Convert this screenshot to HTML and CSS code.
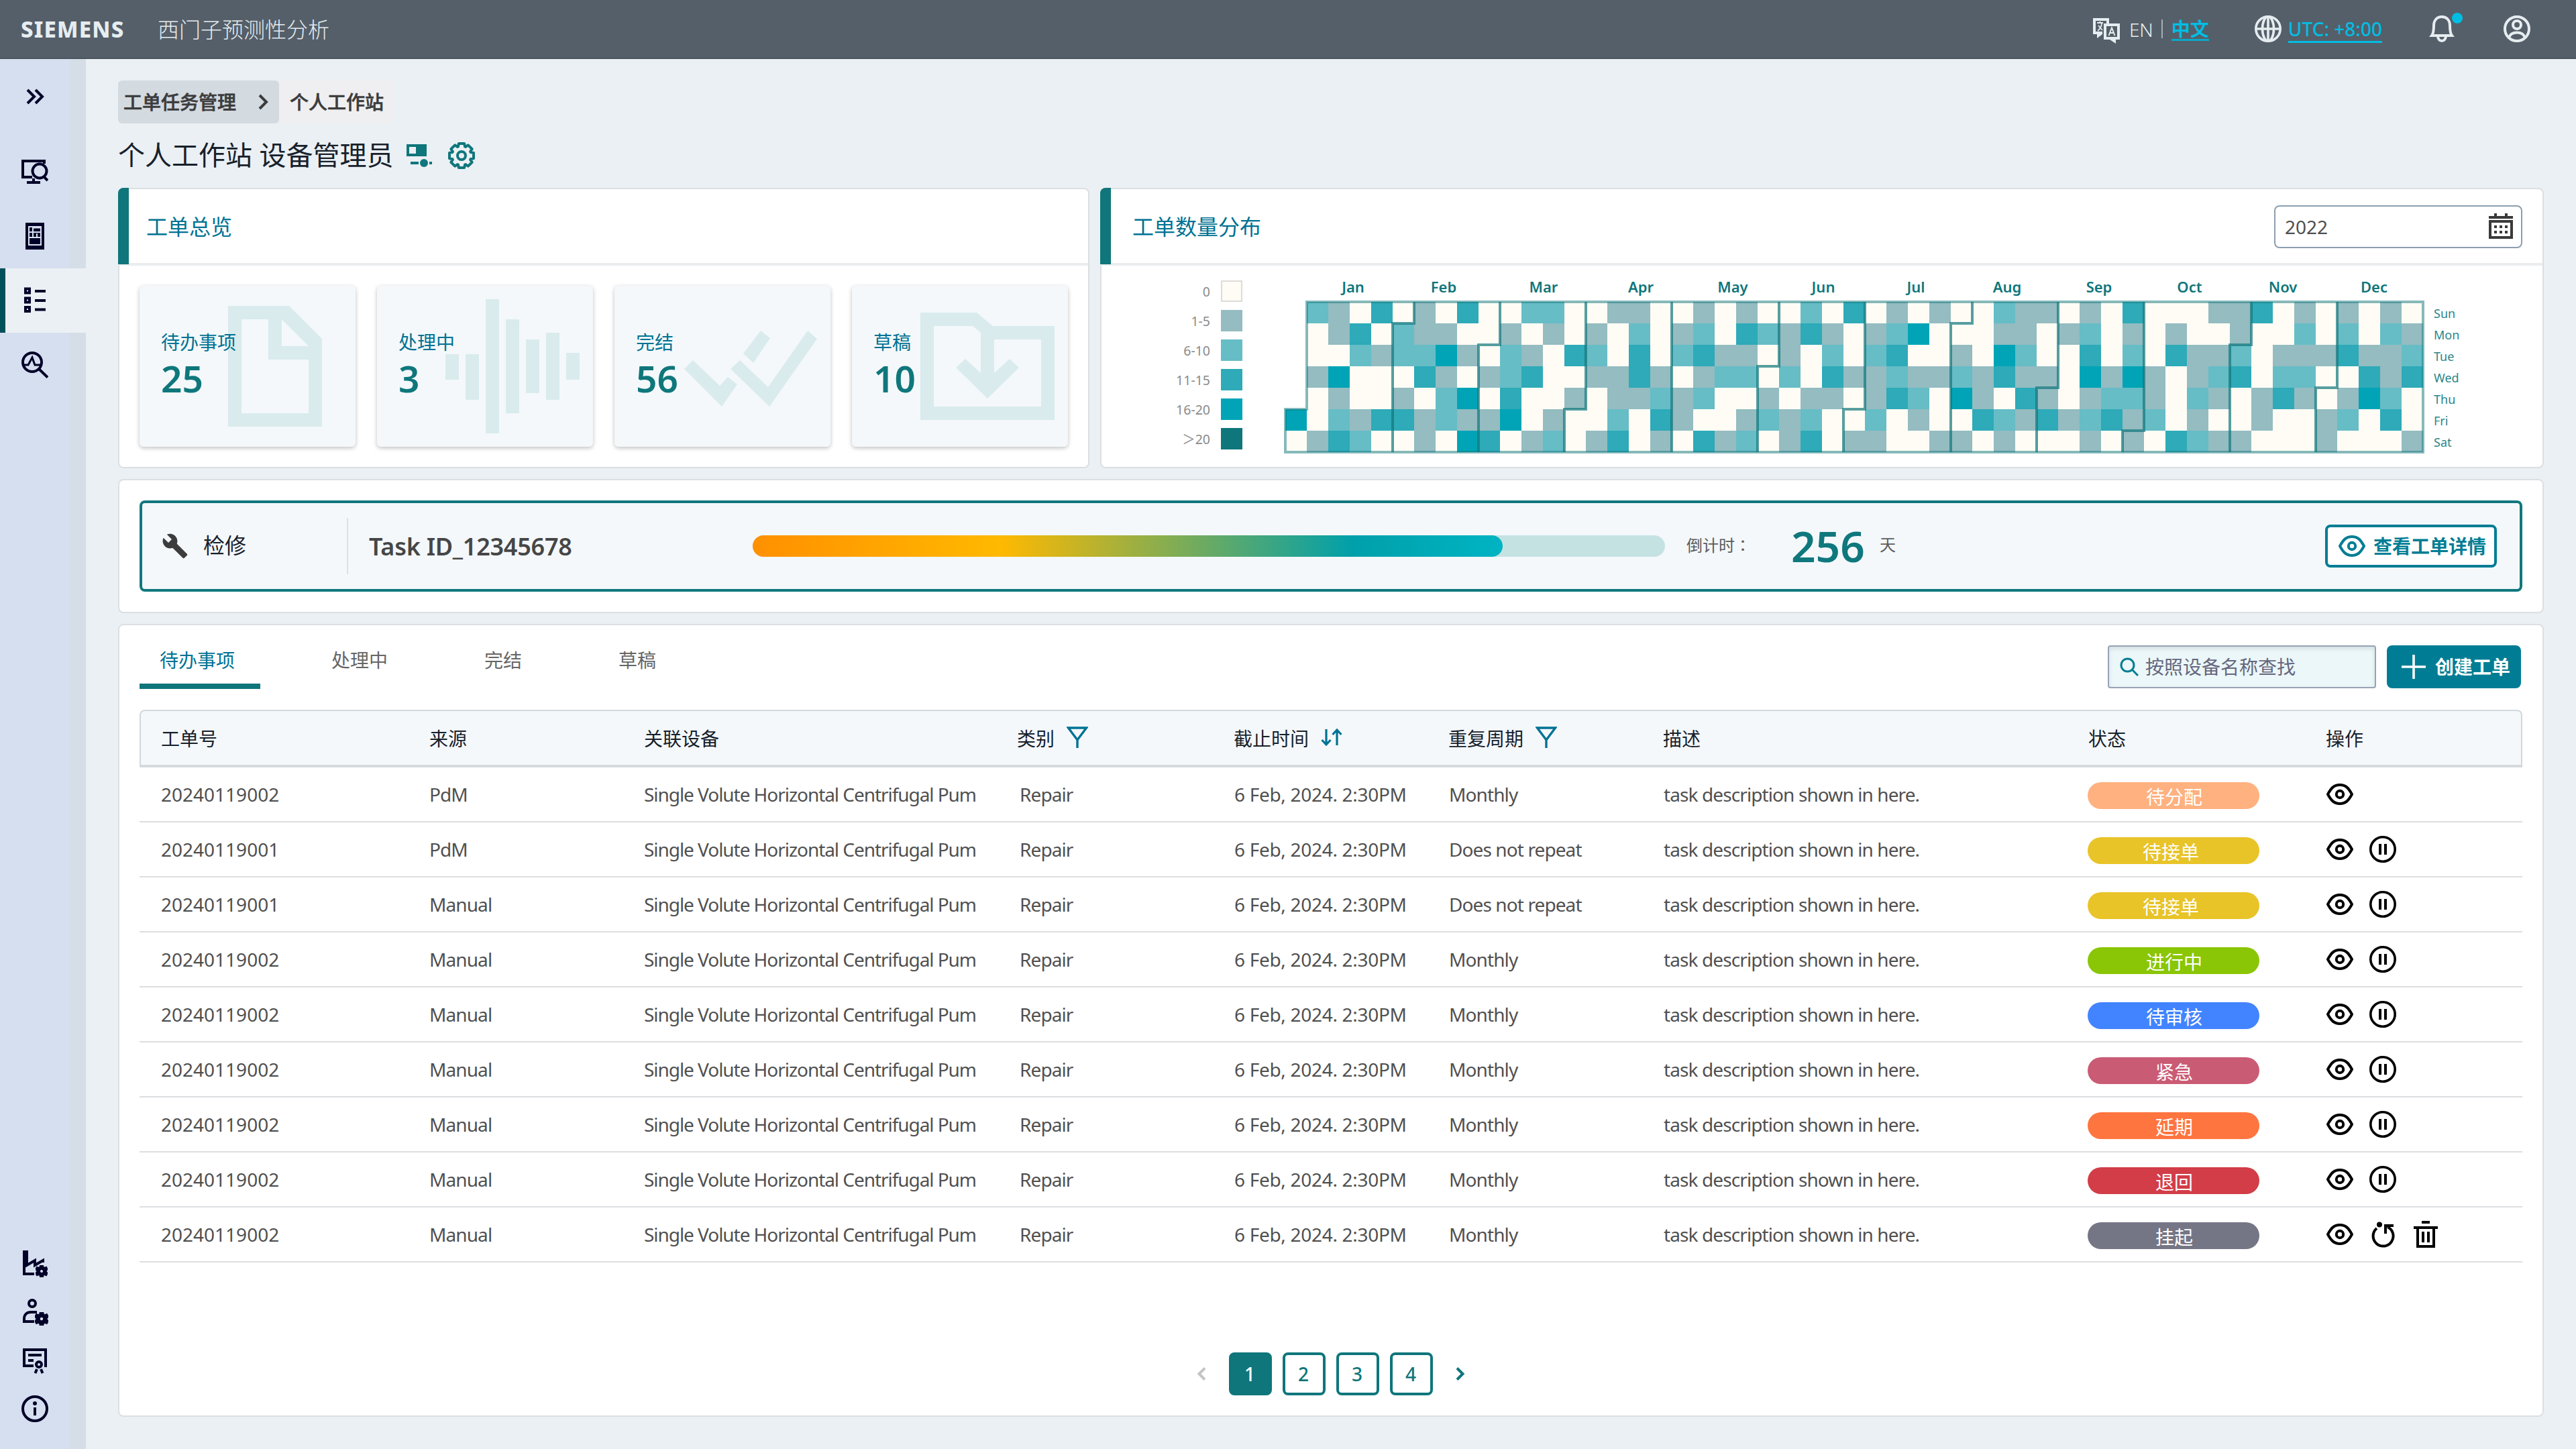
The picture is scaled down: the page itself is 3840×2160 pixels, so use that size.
FILE: index.html
```html
<!DOCTYPE html>
<html lang="zh-CN">
<head>
    <meta charset="UTF-8">
    <title>西门子预测性分析</title>
    <link rel="stylesheet" href="styles.css">
</head>
<body>
    <svg class="sprite">
        <symbol id="gear" viewBox="0 0 40 40">
            <path d="M15.8 2H24.2L25 6.4L26.1 6.9L29.8 4.3L35.7 10.2L33.1 13.9L33.6 15L38 15.8V24.2L33.6 25L33.1 26.1L35.7 29.8L29.8 35.7L26.1 33.1L25 33.6L24.2 38H15.8L15 33.6L13.9 33.1L10.2 35.7L4.3 29.8L6.9 26.1L6.4 25L2 24.2V15.8L6.4 15L6.9 13.9L4.3 10.2L10.2 4.3L13.9 6.9L15 6.4Z" fill="none" stroke="currentColor" stroke-width="4" stroke-linejoin="round"/>
            <circle cx="20" cy="20" r="6" fill="none" stroke="currentColor" stroke-width="4"/>
        </symbol>
        <symbol id="gear-solid" viewBox="0 0 40 40">
            <path fill="currentColor" fill-rule="evenodd" d="M15.5 0H24.5L25.5 6L30 8.5L35.5 6L40 14L35.5 17.5V22.5L40 26L35.5 34L30 31.5L25.5 34L24.5 40H15.5L14.5 34L10 31.5L4.5 34L0 26L4.5 22.5V17.5L0 14L4.5 6L10 8.5L14.5 6ZM20 13.5A6.5 6.5 0 1 0 20 26.5A6.5 6.5 0 1 0 20 13.5Z"/>
        </symbol>
        <symbol id="eye" viewBox="0 0 40 40">
            <path d="M2 20C7 11 11 6 20 6S33 11 38 20C33 29 29 34 20 34S7 29 2 20Z" fill="none" stroke="currentColor" stroke-width="4" stroke-linejoin="round"/>
            <circle cx="20" cy="20" r="5.2" fill="none" stroke="currentColor" stroke-width="4"/>
        </symbol>
        <symbol id="pause" viewBox="0 0 40 40">
            <circle cx="20" cy="20" r="18.2" fill="none" stroke="currentColor" stroke-width="3.6"/>
            <path d="M16 12V28M24 12V28" stroke="currentColor" stroke-width="4"/>
        </symbol>
        <symbol id="restart" viewBox="0 0 40 40">
            <path d="M11 11A15 15 0 1 0 27 9" fill="none" stroke="currentColor" stroke-width="4"/>
            <circle cx="15" cy="5.5" r="4" fill="currentColor"/>
            <path d="M24 19V7H36" fill="none" stroke="currentColor" stroke-width="4"/>
        </symbol>
        <symbol id="trash" viewBox="0 0 40 40">
            <path d="M14 2H26M2 10H38M8 12V38H32V12M16 16V32M24 16V32" fill="none" stroke="currentColor" stroke-width="4"/>
        </symbol>
        <symbol id="filter" viewBox="0 0 32 32">
            <path d="M2.5 2H29.5L16 20ZM16 18V32" fill="none" stroke="currentColor" stroke-width="3.4"/>
        </symbol>
        <symbol id="sort" viewBox="0 0 32 28">
            <path d="M8 2V25M1.5 18L8 25L14.5 18M24 26V3M17.5 10L24 3L30.5 10" fill="none" stroke="currentColor" stroke-width="3.2"/>
        </symbol>
    </svg>

    <header class="topbar">
        <span class="logo">SIEMENS</span>
        <span class="app-name">西门子预测性分析</span>
        <div class="topbar-tools">
            <svg class="icon-lang" width="40" height="40" viewBox="0 0 40 40">
                <path d="M0 1H24V10H20V5H4V21H14V25L6 31V25H0Z" fill="currentColor"/>
                <path d="M6 8H15M10.5 6V8M7 20Q13 15 13 8M8 12L14 19" fill="none" stroke="currentColor" stroke-width="1.8"/>
                <path fill="currentColor" fill-rule="evenodd" d="M16 9H40V33H34V39L25 33H16ZM20 13V29H36V13Z"/>
                <path d="M23.5 27L28 15.5L32.5 27M25 23H31" fill="none" stroke="currentColor" stroke-width="2"/>
            </svg>
            <span class="lang">EN</span>
            <span class="lang-line"></span>
            <span class="lang lang-active">中文</span>
            <svg class="icon-globe" width="40" height="40" viewBox="0 0 40 40" fill="none" stroke="currentColor" stroke-width="3.6">
                <circle cx="20" cy="20" r="18.2"/>
                <ellipse cx="20" cy="20" rx="8.5" ry="18.2"/>
                <path d="M2 20H38M20 2V38"/>
            </svg>
            <span class="utc">UTC: +8:00</span>
            <span class="bell">
                <svg width="40" height="40" viewBox="0 0 40 40" fill="none" stroke="currentColor" stroke-width="4">
                    <path d="M5 30C8 26 8 20 8 15C8 7 13 2 20 2S32 7 32 15C32 20 32 26 35 30Z"/>
                    <path d="M14 31A6 7 0 0 0 26 31"/>
                </svg>
                <span class="bell-dot"></span>
            </span>
            <svg width="40" height="40" viewBox="0 0 40 40" fill="none" stroke="currentColor" stroke-width="4">
                <circle cx="20" cy="20" r="18"/>
                <circle cx="20" cy="14" r="6"/>
                <path d="M8 33C10 27 14 25.5 20 25.5S30 27 32 33"/>
            </svg>
        </div>
    </header>

    <div class="layout">
        <nav class="sidebar">
            <a class="side-toggle">
                <svg width="40" height="40" viewBox="0 0 40 40" fill="none" stroke="currentColor" stroke-width="4"><path d="M9 10L19 20L9 30M21 10L31 20L21 30"/></svg>
            </a>
            <a class="side-item">
                <svg width="40" height="40" viewBox="0 0 40 40" fill="none" stroke="currentColor" stroke-width="4">
                    <path d="M34 8V4H2V28H16M18 30V36M8 36H28"/>
                    <circle cx="27" cy="19" r="10.5"/>
                    <path d="M33 27L39 33"/>
                </svg>
            </a>
            <a class="side-item">
                <svg width="40" height="40" viewBox="0 0 40 40">
                    <path fill="currentColor" d="M6 0H34V40H6Z"/>
                    <path d="M11 6H29V33H11ZM17 7V23M12 14H28M12 22H28M23 16V22M18 7.5H28" fill="none" stroke="#d6dfef" stroke-width="2"/>
                </svg>
            </a>
            <a class="side-item side-active">
                <svg width="40" height="40" viewBox="0 0 40 40" fill="none" stroke="currentColor" stroke-width="4">
                    <path d="M6 2.5H12V8.5H6ZM6 16.5H12V22.5H6ZM6 30H12V36H6ZM20 6H36M20 20H36M20 33.5H36"/>
                </svg>
            </a>
            <a class="side-item">
                <svg width="40" height="40" viewBox="0 0 40 40" fill="none" stroke="currentColor" stroke-width="4">
                    <circle cx="16" cy="16" r="14"/>
                    <path d="M27 27L39 38.5"/>
                    <path d="M4 20H10L16 9L20 20H28" stroke-width="3"/>
                </svg>
            </a>
            <div class="side-bottom">
                <a>
                    <svg width="40" height="40" viewBox="0 0 40 40" fill="none" stroke="currentColor" stroke-width="4">
                        <path d="M19 35H4V2H8V22L20 15V22L32 15V18"/>
                        <path d="M2 3H10V20H2Z" fill="currentColor" stroke="none"/>
                        <use href="#gear-solid" x="21" y="22" width="18" height="18"/>
                    </svg>
                </a>
                <a>
                    <svg width="40" height="40" viewBox="0 0 40 40" fill="none" stroke="currentColor" stroke-width="4">
                        <circle cx="16" cy="7" r="5"/>
                        <path d="M23 20H14C8 20 4 24 4 30V34H19"/>
                        <use href="#gear-solid" x="20" y="20" width="20" height="20"/>
                    </svg>
                </a>
                <a>
                    <svg width="40" height="40" viewBox="0 0 40 40" fill="none" stroke="currentColor" stroke-width="4">
                        <path d="M18 28H4V4H36V30M10 12H30M10 20H18"/>
                        <circle cx="26" cy="26" r="4"/>
                        <path d="M23 33L20.5 39M29 33L31.5 39"/>
                    </svg>
                </a>
                <a>
                    <svg width="40" height="40" viewBox="0 0 40 40" fill="none" stroke="currentColor" stroke-width="4">
                        <circle cx="20" cy="20" r="18"/>
                        <path d="M20 18V30"/>
                        <circle cx="20" cy="12" r="3" fill="currentColor" stroke="none"/>
                    </svg>
                </a>
            </div>
        </nav>

        <main class="main">
            <div class="breadcrumb">
                <span class="crumb crumb-parent">工单任务管理
                    <svg width="16" height="24" viewBox="0 0 16 24" fill="none" stroke="currentColor" stroke-width="4"><path d="M2 2L12 12L2 22"/></svg>
                </span>
                <span class="crumb crumb-current">个人工作站</span>
            </div>
            <h1 class="page-title">个人工作站 设备管理员
                <svg class="icon-role" width="40" height="36" viewBox="0 0 40 36">
                    <path fill="currentColor" fill-rule="evenodd" d="M0 0H30V18H0ZM4 4V14H14V4Z"/>
                    <path d="M6 28H18M34 28H38" stroke="currentColor" stroke-width="4"/>
                    <circle cx="26" cy="28" r="6" fill="currentColor"/>
                </svg>
                <svg class="icon-gear" width="40" height="40"><use href="#gear"/></svg>
            </h1>

            <div class="top-cards">
                <section class="card overview">
                    <div class="card-head"><h2>工单总览</h2></div>
                    <div class="tiles">
                        <div class="tile">
                            <svg class="tile-bg" viewBox="0 0 322 240"><path fill-rule="evenodd" d="M132 30H223L272 79V210H132ZM152 50V190H252V110H192V50ZM212 50V90H252Z"/></svg>
                            <span class="tile-label">待办事项</span>
                            <span class="tile-num">25</span>
                        </div>
                        <div class="tile">
                            <svg class="tile-bg" viewBox="0 0 322 240"><path d="M102 102h20v38h-20zM132 102h20v68h-20zM162 20h20v200h-20zM192 50h20v140h-20zM222 80h20v80h-20zM252 70h20v100h-20zM282 100h20v40h-20z"/></svg>
                            <span class="tile-label">处理中</span>
                            <span class="tile-num">3</span>
                        </div>
                        <div class="tile">
                            <svg class="tile-bg" viewBox="0 0 322 240"><path d="M104 124L117 111L157 149L169 136L183 147L160 180ZM218 67L232 78L207 115L192 101ZM173 124L187 111L229 151L288 67L302 79L231 180Z"/></svg>
                            <span class="tile-label">完结</span>
                            <span class="tile-num">56</span>
                        </div>
                        <div class="tile">
                            <svg class="tile-bg" viewBox="0 0 322 240"><path fill-rule="evenodd" d="M102 40H186L210 60H302V200H102ZM122 60V180H282V80H212V130L235 109L249 122L202 168L155 122L169 109L192 130V70L180 60Z"/></svg>
                            <span class="tile-label">草稿</span>
                            <span class="tile-num">10</span>
                        </div>
                    </div>
                </section>

                <section class="card distribution">
                    <div class="card-head">
                        <h2>工单数量分布</h2>
                        <div class="date-input">
                            <span>2022</span>
                            <svg width="36" height="40" viewBox="0 0 36 40">
                                <path fill="currentColor" fill-rule="evenodd" d="M0 4H8V0H12V4H24V0H28V4H36V8H0ZM0 10H36V38H0ZM4 14V34H32V14ZM8 18H12V22H8ZM16 18H20V22H16ZM24 18H28V22H24ZM8 26H12V30H8ZM16 26H20V30H16ZM24 26H28V30H24Z"/>
                            </svg>
                        </div>
                    </div>
                    <div class="heat-body">
                        <ul class="legend">
                            <li>0<i class="lv0"></i></li>
                            <li>1-5<i class="lv1"></i></li>
                            <li>6-10<i class="lv2"></i></li>
                            <li>11-15<i class="lv3"></i></li>
                            <li>16-20<i class="lv4"></i></li>
                            <li>＞20<i class="lv5"></i></li>
                        </ul>
                        <svg class="heat" id="heat" width="1790" height="272" viewBox="-8 -40 1790 272"></svg>
                    </div>
                </section>
            </div>

            <section class="card countdown">
                <div class="banner">
                    <svg class="icon-wrench" width="40" height="40" viewBox="0 0 24 24"><path fill="currentColor" d="M22.7 19l-9.1-9.1c.9-2.3.4-5-1.5-6.9-2-2-5-2.4-7.4-1.3L9 6 6 9 1.6 4.7C.4 7.1.9 10.1 2.9 12.1c1.9 1.9 4.6 2.4 6.9 1.5l9.1 9.1c.4.4 1 .4 1.4 0l2.3-2.3c.5-.4.5-1.1.1-1.4z"/></svg>
                    <span class="banner-type">检修</span>
                    <span class="banner-id">Task ID_12345678</span>
                    <div class="progress"><div class="progress-fill" style="width: 82.2%"></div></div>
                    <span class="count-label">倒计时<span class="colon" lang="zh-TW">：</span></span>
                    <span class="count-num">256</span>
                    <span class="count-unit">天</span>
                    <button class="btn-outline"><svg width="40" height="40"><use href="#eye"/></svg>查看工单详情</button>
                </div>
            </section>

            <section class="card orders">
                <div class="toolbar">
                    <div class="tabs">
                        <a class="tab tab-active">待办事项</a>
                        <a class="tab">处理中</a>
                        <a class="tab">完结</a>
                        <a class="tab">草稿</a>
                    </div>
                    <div class="search">
                        <svg width="28" height="28" viewBox="0 0 28 28" fill="none" stroke="currentColor" stroke-width="3"><circle cx="11.5" cy="11.5" r="9.5"/><path d="M18 18L27 27"/></svg>
                        按照设备名称查找
                    </div>
                    <button class="btn-create">
                        <svg width="36" height="36" viewBox="0 0 36 36"><path d="M18 0V36M0 18H36" stroke="currentColor" stroke-width="3.6"/></svg>
                        创建工单
                    </button>
                </div>

                <div class="table" id="orders">
                    <div class="tr th">
                        <span>工单号</span>
                        <span>来源</span>
                        <span>关联设备</span>
                        <span>类别<svg width="32" height="32"><use href="#filter"/></svg></span>
                        <span>截止时间<svg width="32" height="28"><use href="#sort"/></svg></span>
                        <span>重复周期<svg width="32" height="32"><use href="#filter"/></svg></span>
                        <span>描述</span>
                        <span>状态</span>
                        <span>操作</span>
                    </div>
                </div>

                <div class="pager">
                    <svg class="prev" width="14" height="20" viewBox="0 0 14 20" fill="none" stroke="currentColor" stroke-width="4"><path d="M12 1.5L3.5 10L12 18.5"/></svg>
                    <a class="page page-active">1</a>
                    <a class="page">2</a>
                    <a class="page">3</a>
                    <a class="page">4</a>
                    <svg class="next" width="14" height="20" viewBox="0 0 14 20" fill="none" stroke="currentColor" stroke-width="4"><path d="M2 1.5L10.5 10L2 18.5"/></svg>
                </div>
            </section>
        </main>
    </div>
    <script src="script.js"></script>
</body>
</html>
```
FILE: styles.css
```css
* {
    box-sizing: border-box;
}

body {
    margin: 0;
    width: 3840px;
    height: 2160px;
    overflow: hidden;
    background-color: #ebf0f4;
    font-family: "Noto Sans", "Noto Sans CJK SC", sans-serif;
    font-size: 28px;
    line-height: 40px;
    color: #505050;
}

svg {
    display: block;
    flex-shrink: 0;
}

.sprite {
    display: none;
}

button {
    font: inherit;
    cursor: pointer;
}

/* top bar */
.topbar {
    display: flex;
    align-items: center;
    height: 88px;
    padding: 0 68px 0 31px;
    background-color: #555f69;
    border-bottom: 2px solid #4b5560;
    color: #e6edf0;
}

.logo {
    width: 204px;
    padding-top: 1px;
    font-size: 33px;
    font-weight: 800;
    letter-spacing: 1.2px;
}

.app-name {
    padding-top: 1px;
    font-size: 32px;
    font-weight: 300;
}

.topbar-tools {
    display: flex;
    align-items: center;
    margin-left: auto;
}

.icon-lang {
    margin: 6px 14px 0 0;
}

.lang {
    padding-top: 1px;
    font-weight: 300;
}

.lang-line {
    width: 2px;
    height: 28px;
    margin: 0 13px 0 12px;
    background-color: #a5adb3;
}

.lang-active {
    height: 35px;
    margin-right: 68px;
    padding-top: 0;
    line-height: 35px;
    font-weight: 700;
    color: #00bde3;
    border-bottom: 3px solid #0aa9c9;
}

.utc {
    height: 41px;
    margin: 0 69px 0 10px;
    line-height: 41px;
    font-weight: 500;
    color: #00bde3;
    border-bottom: 3px solid #00bde3;
}

.bell {
    position: relative;
    margin-right: 72px;
}

.bell-dot {
    position: absolute;
    top: -4px;
    right: -11px;
    width: 16px;
    height: 16px;
    border-radius: 50%;
    background-color: #00bde3;
}

.layout {
    display: flex;
    height: 2072px;
}

/* sidebar */
.sidebar {
    display: flex;
    flex-direction: column;
    width: 128px;
    padding-bottom: 24px;
    background: linear-gradient(to right, #d6dfef 104px, #d5dde7 104px);
    color: #000028;
}

.side-toggle {
    height: 120px;
    padding: 36px 0 0 32px;
}

.side-item {
    height: 96px;
    padding: 28px 0 0 32px;
}

.side-active {
    padding-left: 24px;
    background-color: #ebf0f4;
    border-left: 8px solid #005159;
}

.side-bottom {
    margin-top: auto;
}

.side-bottom a {
    display: block;
    height: 72px;
    padding: 16px 0 0 32px;
}

/* content */
.main {
    display: flex;
    flex-direction: column;
    width: 3712px;
    padding: 32px 48px 48px;
}

.breadcrumb {
    display: flex;
    height: 64px;
}

.crumb {
    display: flex;
    align-items: center;
    padding-bottom: 1px;
    font-weight: 500;
    color: #3c3c3c;
    -webkit-text-stroke: .6px #3c3c3c;
}

.crumb-parent {
    justify-content: space-between;
    width: 240px;
    padding-right: 15px;
    padding-left: 8px;
    border-radius: 6px;
    background-color: #d3dae0;
}

.crumb-current {
    width: 171px;
    padding-left: 16px;
    background-color: #efeff1;
}

.page-title {
    display: flex;
    align-items: center;
    height: 96px;
    margin: 0;
    padding-bottom: 2px;
    font-size: 40px;
    font-weight: 400;
    color: #17212b;
}

.icon-role {
    margin: 4px 0 0 20px;
    color: #0f767b;
}

.icon-gear {
    margin: 2px 0 0 22px;
    color: #0f767b;
}

.card {
    border: 2px solid #dcdfe2;
    border-radius: 8px;
    background-color: #fff;
}

.top-cards {
    display: grid;
    grid-template-columns: 1448px 2152px;
    gap: 16px;
    height: 418px;
}

.card-head {
    display: flex;
    align-items: center;
    justify-content: space-between;
    height: 116px;
    margin: -2px 0 0 -2px;
    padding: 0 30px 0 42px;
    border-top: 2px solid #dcdfe2;
    border-top-left-radius: 8px;
    background: linear-gradient(#0f767b, #0f767b) 0 0 / 16px 114px no-repeat border-box,
        linear-gradient(#ebedef, #ebedef) 0 100% / 100% 4px no-repeat;
}

.card-head {
    border-top: none;
}

.overview .card-head,
.distribution .card-head {
    border-right: none;
}

.card-head h2 {
    margin: 0;
    font-size: 32px;
    font-weight: 400;
    color: #007293;
}

.distribution .card-head {
    padding-left: 48px;
}

.tiles {
    display: grid;
    grid-template-columns: repeat(4, 1fr);
    gap: 32px;
    padding: 30px;
}

.tile {
    position: relative;
    display: flex;
    flex-direction: column;
    height: 240px;
    padding: 64px 32px 0;
    border-radius: 6px;
    background-color: #f4f8fb;
    box-shadow: 0 2px 6px rgba(0, 0, 0, .25);
}

.tile-bg {
    position: absolute;
    inset: 0;
    fill: #d9ebed;
}

.tile-label {
    position: relative;
    color: #007293;
}

.tile-num {
    position: relative;
    margin-top: 4px;
    font-size: 55px;
    line-height: 60px;
    font-weight: 600;
    color: #0f777b;
}

.date-input {
    display: flex;
    align-items: center;
    justify-content: space-between;
    width: 370px;
    height: 64px;
    padding: 0 12px 0 14px;
    border: 2px solid #8c9fb0;
    border-radius: 8px;
}

.date-input svg {
    color: #3a3a3a;
}

/* heat map */
.heat-body {
    display: flex;
}

.legend {
    width: 160px;
    margin: 0 56px 0 50px;
    padding: 22px 0 0;
    list-style: none;
    font-size: 19.5px;
    line-height: 34px;
    color: #8a8a8a;
}

.legend li {
    display: flex;
    justify-content: flex-end;
    height: 32px;
    margin-bottom: 12px;
}

.legend i {
    width: 32px;
    height: 32px;
    margin-left: 16px;
}

.lv0 { background-color: #fffcf5; fill: #fffcf5; }
.lv1 { background-color: #94bcc1; fill: #94bcc1; }
.lv2 { background-color: #66bdc6; fill: #66bdc6; }
.lv3 { background-color: #2eaab8; fill: #2eaab8; }
.lv4 { background-color: #00a4b6; fill: #00a4b6; }
.lv5 { background-color: #0f767b; fill: #0f767b; }

.legend .lv0 {
    border: 2px solid #dddcd8;
}

.heat {
    margin-top: 14px;
}

.heat-outline,
.heat-split {
    fill: none;
    stroke: #0f767b;
    stroke-width: 4;
    stroke-opacity: .5;
}

.heat-split {
    stroke-opacity: .7;
}

.heat-month {
    font-size: 22px;
    font-weight: 600;
    fill: #0f767b;
    text-anchor: middle;
}

.heat-day {
    font-size: 18px;
    fill: #2a868a;
}

/* countdown banner */
.countdown {
    height: 200px;
    margin-top: 16px;
    padding: 30px;
}

.banner {
    display: flex;
    align-items: center;
    height: 136px;
    padding: 0 34px 0 29px;
    border: 4px solid #0f787d;
    border-radius: 8px;
    background-color: #f4f8fb;
}

.icon-wrench {
    margin-right: 22px;
    color: #3c3c3c;
}

.banner-type {
    width: 216px;
    height: 84px;
    line-height: 82px;
    margin-right: 31px;
    border-right: 2px solid #dde1e4;
    font-size: 32px;
    color: #17212b;
}

.banner-id {
    width: 572px;
    padding-top: 2px;
    font-size: 36px;
    font-weight: 600;
    letter-spacing: -.25px;
    color: #464646;
}

.progress {
    width: 1360px;
    height: 32px;
    border-radius: 16px;
    background-color: #c5e2e3;
}

.progress-fill {
    height: 32px;
    border-radius: 16px;
    background: linear-gradient(to right, #ff9000 0%, #ffb900 33%, #00a0aa 80%, #00b4c3 100%);
}

.count-label {
    width: 156px;
    margin-left: 32px;
    padding-bottom: 3px;
    font-size: 24px;
    line-height: 36px;
    color: #5c5c5c;
}

.colon {
    font-family: "Noto Sans CJK TC", sans-serif;
}

.count-num {
    width: 132px;
    font-size: 64px;
    font-weight: 600;
    color: #0f787d;
}

.count-unit {
    padding-bottom: 4px;
    font-size: 24px;
    color: #5c5c5c;
}

.btn-outline {
    display: flex;
    align-items: center;
    width: 256px;
    height: 64px;
    margin-left: auto;
    padding: 0 0 0 16px;
    border: 4px solid #007d94;
    border-radius: 8px;
    background-color: #fff;
    font-weight: 700;
    white-space: nowrap;
    color: #007d94;
}

.btn-outline svg {
    margin-right: 12px;
}

/* orders */
.orders {
    height: 1182px;
    margin-top: 16px;
    padding: 30px;
}

.toolbar {
    display: flex;
    height: 96px;
}

.tabs {
    display: flex;
    margin-right: auto;
}

.tab {
    height: 65px;
    margin-right: 84px;
    padding: 0 30px;
    line-height: 44px;
    color: #666;
}

.tab-active {
    width: 180px;
    margin-right: 76px;
    color: #007293;
    border-bottom: 8px solid #0f767b;
}

.search {
    display: flex;
    align-items: center;
    width: 400px;
    height: 64px;
    margin-right: 16px;
    padding-left: 16px;
    border: 2px solid #98a2b5;
    border-radius: 4px;
    background-color: #ebf7f8;
    box-shadow: inset 0 3px 6px rgba(60, 80, 100, .15);
    color: #66667e;
}

.search svg {
    margin-right: 10px;
    color: #007d94;
}

.btn-create {
    display: flex;
    align-items: center;
    width: 200px;
    height: 64px;
    margin-right: 2px;
    padding: 0 0 0 22px;
    border: none;
    border-radius: 8px;
    background-color: #007d94;
    font-weight: 700;
    white-space: nowrap;
    color: #fff;
}

.btn-create svg {
    margin-right: 14px;
}

.tr {
    display: grid;
    grid-template-columns: 400px 320px 560px 320px 320px 320px 634px 354px 260px;
    align-items: center;
    height: 82px;
    padding-left: 32px;
    border-bottom: 2px solid #dcdee0;
}

.th {
    height: 86px;
    padding: 1px 0 0 30px;
    border: 2px solid #d2d8dc;
    border-bottom: 4px solid #d6dadd;
    border-radius: 8px 8px 0 0;
    background-color: #f4f8fb;
    color: #17212b;
}

.th span {
    display: flex;
    align-items: center;
}

.th span:nth-child(n+4) {
    margin-left: -1px;
}

.th span:nth-child(4) {
    margin-left: -4px;
}

.th svg {
    margin: -3px 0 0 18px;
    color: #007293;
}

.text {
    letter-spacing: -.9px;
}

.date {
    letter-spacing: -.3px;
}

.device {
    width: 498px;
    overflow: hidden;
    white-space: nowrap;
    letter-spacing: -1.05px;
}

.status {
    width: 256px;
    height: 40px;
    margin: 4px 0 0 -2px;
    padding: 3px 0 0 2px;
    border-radius: 20px;
    text-align: center;
    line-height: 39px;
    color: #fff;
}

.unassigned { background-color: #ffb180; }
.pending { background-color: #e8c428; }
.running { background-color: #8ac605; }
.review { background-color: #4284ff; }
.urgent { background-color: #ca5b74; }
.delayed { background-color: #ff753f; }
.returned { background-color: #d23d48; }
.suspended { background-color: #757685; }

.pending {
    padding-right: 10px;
}

.actions {
    display: flex;
    gap: 24px;
    color: #000;
}

/* pagination */
.pager {
    display: flex;
    align-items: center;
    gap: 16px;
    margin: 134px 0 0 1576px;
}

.page {
    width: 64px;
    height: 64px;
    padding-right: 2px;
    border: 4px solid #0f767b;
    border-radius: 8px;
    text-align: center;
    line-height: 56px;
    font-weight: 500;
    color: #0f767b;
}

.page-active {
    background-color: #0f767b;
    color: #fff;
}

.prev {
    margin-right: 18px;
    color: #c4c4c4;
}

.next {
    margin-left: 18px;
    color: #0f767b;
}
```
FILE: script.js
```js
// one string per weekday, one digit per week; "." is a day outside the year
var heatRows = [
    ".2103010300220011001010020301010021101030001130101010",
    ".0130211001010102012032131012400011012010100100202021",
    ".0021224102103203023110102023001042003020311201113112",
    ".1400031012300113101220203112112131104141012302200313",
    ".0100102403001011212001011013204103101221021013101420",
    "40213312114010020310012120020100321312312010010012030",
    "01320010430120130103120130110011010001010321100010001"
];
var days = ["Sun", "Mon", "Tue", "Wed", "Thu", "Fri", "Sat"];
var months = [["Jan", 101], ["Feb", 236], ["Mar", 385], ["Apr", 530], ["May", 667], ["Jun", 802],
    ["Jul", 940], ["Aug", 1076], ["Sep", 1213], ["Oct", 1348], ["Nov", 1487], ["Dec", 1623]];
// [column where the next month starts, row of the step]; row 0 means a straight line
var splits = [[6, 1], [10, 2], [14, 5], [18, 0], [23, 3], [27, 5], [32, 1], [36, 4], [40, 6], [45, 2], [49, 4]];
var size = 32;

function drawHeat() {
    var out = "";
    heatRows.forEach(function (row, y) {
        for (var x = 0; x < row.length; x++) {
            if (row[x] === ".") continue;
            out += '<rect class="lv' + row[x] + '" x="' + x * size + '" y="' + y * size + '" width="32" height="32"/>';
        }
        out += '<text class="heat-day" x="1712" y="' + (y * size + 24) + '">' + days[y] + '</text>';
    });
    out += '<path class="heat-outline" d="M0 160H32V0H1696V224H0Z"/>';
    splits.forEach(function (s) {
        var x = s[0] * size;
        var d = "M" + x + " 0";
        if (s[1]) d += "V" + s[1] * size + "H" + (x - size);
        out += '<path class="heat-split" d="' + d + 'V224"/>';
    });
    months.forEach(function (m) {
        out += '<text class="heat-month" x="' + m[1] + '" y="-14">' + m[0] + '</text>';
    });
    document.getElementById("heat").innerHTML = out;
}

var orders = [
    ["20240119002", "PdM", "Monthly", "unassigned", "待分配", ["eye"]],
    ["20240119001", "PdM", "Does not repeat", "pending", "待接单", ["eye", "pause"]],
    ["20240119001", "Manual", "Does not repeat", "pending", "待接单", ["eye", "pause"]],
    ["20240119002", "Manual", "Monthly", "running", "进行中", ["eye", "pause"]],
    ["20240119002", "Manual", "Monthly", "review", "待审核", ["eye", "pause"]],
    ["20240119002", "Manual", "Monthly", "urgent", "紧急", ["eye", "pause"]],
    ["20240119002", "Manual", "Monthly", "delayed", "延期", ["eye", "pause"]],
    ["20240119002", "Manual", "Monthly", "returned", "退回", ["eye", "pause"]],
    ["20240119002", "Manual", "Monthly", "suspended", "挂起", ["eye", "restart", "trash"]]
];

function drawOrders() {
    var table = document.getElementById("orders");
    orders.forEach(function (o) {
        var row = document.createElement("div");
        row.className = "tr";
        var icons = o[5].map(function (name) {
            return '<svg width="40" height="40"><use href="#' + name + '"/></svg>';
        }).join("");
        row.innerHTML = "<span>" + o[0] + '</span><span class="text">' + o[1] + "</span>" +
            '<span class="device">Single Volute Horizontal Centrifugal Pum</span>' +
            '<span class="text">Repair</span><span class="date">6 Feb, 2024. 2:30PM</span>' +
            '<span class="text">' + o[2] + "</span>" +
            '<span class="text">task description shown in here.</span>' +
            '<span class="status ' + o[3] + '">' + o[4] + "</span>" +
            '<span class="actions">' + icons + "</span>";
        table.appendChild(row);
    });
}

drawHeat();
drawOrders();
```
